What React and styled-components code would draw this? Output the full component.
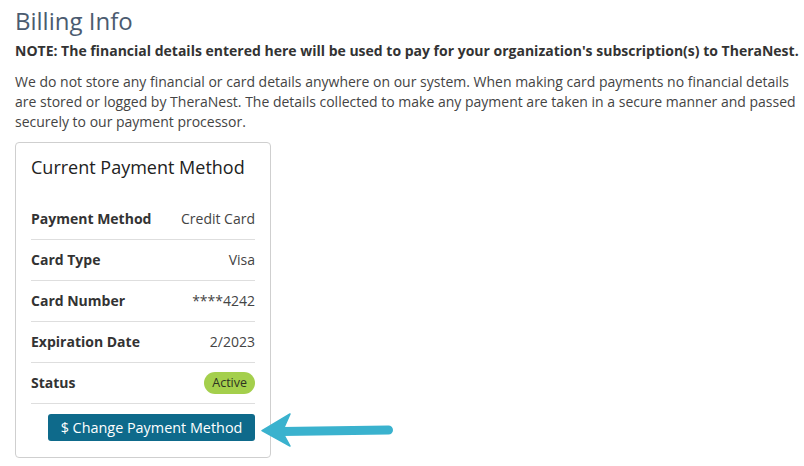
import React from "react";
import styled, { createGlobalStyle } from "styled-components";

const GlobalStyle = createGlobalStyle`
  body {
    margin: 0;
    background: #fff;
    font-family: "Open Sans", "Liberation Sans", sans-serif;
    color: #333;
  }
`;

const Page = styled.div`
  padding: 7.5px 4px 0 15px;
`;

const Title = styled.h1`
  margin: 0;
  font-size: 24px;
  line-height: 26.4px;
  font-weight: 400;
  color: #4b5b70;
`;

const Note = styled.p`
  margin: 7.4px 0 0;
  font-size: 14px;
  line-height: 20px;
  font-weight: 700;
  color: #333;
`;

const Para = styled.p`
  margin: 10.6px 0 0;
  font-size: 14px;
  line-height: 20px;
  color: #444;
`;

const CardArea = styled.div`
  position: relative;
  margin-top: 10px;
`;

const Card = styled.div`
  width: 224px;
  padding: 0 15px 16px;
  border: 1px solid #cfcfcf;
  border-radius: 4px;
`;

const CardTitle = styled.h3`
  margin: 14.5px 0 20px;
  font-size: 18px;
  line-height: 21.6px;
  font-weight: 400;
  color: #222;
`;

const Row = styled.div`
  display: flex;
  align-items: center;
  justify-content: space-between;
  height: 40px;
  border-bottom: 1px solid #dedede;
  font-size: 14px;
  line-height: 20px;
`;

const Label = styled.span`
  font-weight: 700;
  color: #333;
`;

const Value = styled.span`
  color: #444;
`;

const Badge = styled.span`
  display: inline-flex;
  align-items: center;
  height: 22px;
  padding: 0 8px;
  border-radius: 11px;
  background: #a4cf4c;
  color: #2e3322;
  font-size: 12.5px;
  font-weight: 500;
`;

const Actions = styled.div`
  display: flex;
  justify-content: flex-end;
  margin-top: 10px;
`;

const Button = styled.button`
  height: 27px;
  width: 207px;
  padding: 0;
  border: none;
  border-radius: 3px;
  background: #0e6a8b;
  color: #fff;
  font-family: inherit;
  font-size: 14.4px;
  cursor: pointer;
`;

const Arrow = styled.svg`
  position: absolute;
  left: 243px;
  top: 268px;
`;

const rows = [
  ["Payment Method", "Credit Card"],
  ["Card Type", "Visa"],
  ["Card Number", "****4242"],
  ["Expiration Date", "2/2023"],
];

export default function App() {
  return (
    <>
      <GlobalStyle />
      <Page>
        <Title>Billing Info</Title>
        <Note>
          NOTE: The financial details entered here will be used to pay for your organization's
          subscription(s) to TheraNest.
        </Note>
        <Para>
          We do not store any financial or card details anywhere on our system. When making card
          payments no financial details are stored or logged by TheraNest. The details collected to
          make any payment are taken in a secure manner and passed securely to our payment processor.
        </Para>
        <CardArea>
          <Card>
            <CardTitle>Current Payment Method</CardTitle>
            {rows.map(([label, value]) => (
              <Row key={label}>
                <Label>{label}</Label>
                <Value>{value}</Value>
              </Row>
            ))}
            <Row>
              <Label>Status</Label>
              <Badge>Active</Badge>
            </Row>
            <Actions>
              <Button>$ Change Payment Method</Button>
            </Actions>
          </Card>
          {/* annotation arrow pointing at the button */}
          <Arrow width="142" height="42" viewBox="0 0 142 42">
            <line x1="24" y1="21.5" x2="130.5" y2="20" stroke="#3ab2ce" strokeWidth="9" strokeLinecap="round" />
            <path d="M4 20.7 L32 4 L26 17.5 L26 25 L32 36 Z" fill="#3ab2ce" stroke="#3ab2ce" strokeWidth="1.5" strokeLinejoin="round" />
          </Arrow>
        </CardArea>
      </Page>
    </>
  );
}
